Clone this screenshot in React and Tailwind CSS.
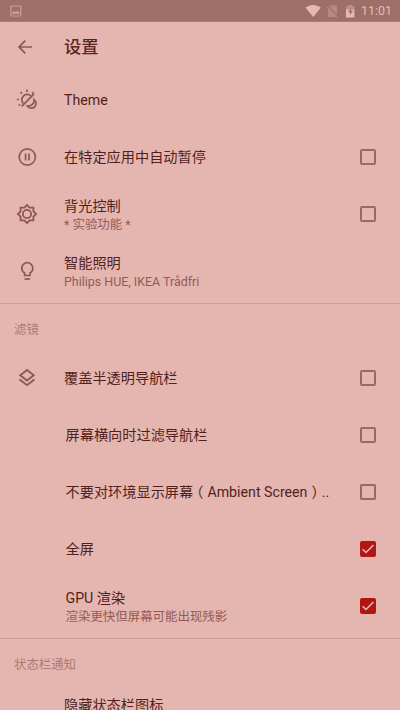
import React from 'react';

const stroke = { fill: 'none', stroke: 'currentColor' };

function ThemeIcon() {
  return (
    <svg className="h-[22px] w-[22px]" viewBox="0 0 22 22" {...stroke} strokeWidth="1.7">
      <path d="M7.400 14.600A5 5 0 1 1 14.900 7" />
      <path d="M5.700 17.300 18.100 4.900" />
      <path d="M18.100 10.600c2.200 1.800 2.500 5 .8 7-1.900 2.200-5.600 2.200-7.600-.6 4 .5 7.300-2.400 6.800-6.400Z" />
      <path d="M11 .6v2.400M4.500 3.200l1.400 1.400M17.500 3.200l-1.400 1.400M.9 10.500H3M2.700 16.600l1.500-1.200" />
    </svg>
  );
}

function PauseIcon() {
  return (
    <svg className="h-[22px] w-[22px]" viewBox="0 0 22 22" {...stroke} strokeWidth="1.700">
      <circle cx="11.300" cy="11" r="8.100" />
      <path d="M9.600 7.500v7M13 7.500v7" />
    </svg>
  );
}

function SunIcon() {
  return (
    <svg className="h-[22px] w-[22px]" viewBox="0 0 24 24" fill="currentColor">
      <path d="M20 8.690V4h-4.690L12 .69 8.690 4H4v4.690L.69 12 4 15.310V20h4.690L12 23.310 15.310 20H20v-4.690L23.310 12 20 8.690zm-2 5.790V18h-3.520L12 20.480 9.520 18H6v-3.520L3.520 12 6 9.520V6h3.520L12 3.520 14.480 6H18v3.520L20.480 12 18 14.480zM12 6.500a5.500 5.500 0 1 0 0 11 5.500 5.500 0 0 0 0-11zm0 9a3.500 3.500 0 1 1 0-7 3.500 3.500 0 0 1 0 7z" />
    </svg>
  );
}

function BulbIcon() {
  return (
    <svg className="h-[22px] w-[22px]" viewBox="0 0 22 22" {...stroke} strokeWidth="1.700">
      <path d="M8.600 15.500v-2.600C6.800 11.900 5.800 10.200 5.800 8.200a5.500 5.500 0 0 1 11 0c0 2-1 3.700-2.800 4.700v2.600Z" />
      <path d="M8.500 19h5.600" />
    </svg>
  );
}

function LayersIcon() {
  return (
    <svg className="h-[22px] w-[22px]" viewBox="0 0 24 24" fill="currentColor">
      <path d="M11.990 18.540l-7.370-5.730L3 14.070l9 7 9-7-1.630-1.270-7.380 5.740zM12 16l7.360-5.730L21 9l-9-7-9 7 1.630 1.270L12 16zm0-11.470L17.740 9 12 13.470 6.260 9 12 4.530z" />
    </svg>
  );
}

function BackIcon() {
  return (
    <svg className="h-[22px] w-[22px]" viewBox="0 0 22 22" {...stroke} strokeWidth="1.700">
      <path d="M18 11H5M11.300 4.700 5 11l6.300 6.300" />
    </svg>
  );
}

function StatusBar() {
  return (
    <div className="flex h-[22px] shrink-0 items-center justify-between border-b border-[#aa7a74] bg-[#9e6f69] pr-[8px] pl-[10px] text-[#e7b8b2]">
      <svg className="h-[12px] w-[12px] text-[#cc9e98]" viewBox="0 0 12 12">
        <rect x=".8" y="1" width="10" height="10" rx=".8" {...stroke} strokeWidth="1.200" />
        <path d="M2.300 9V7.200l1.700-1.200 1.800 1 1.700-1.300L9.300 7.500V9Z" fill="currentColor" />
      </svg>
      <div className="flex items-center">
        <svg className="h-[13px] w-[16px]" viewBox="0 0 16 13" fill="currentColor">
          <path d="M.4 3.500C5 0 11 0 15.900 3.500L8.300 12.900Z" />
        </svg>
        <svg className="ml-[5px] h-[14px] w-[12px] text-[#b78780]" viewBox="0 0 12 14">
          <path d="M4.500 1.300H10a1 1 0 0 1 1 1V13H2V4.300Z" fill="currentColor" />
          <path d="M1.500 1.500 12 13" stroke="#9e6f69" strokeWidth="1.300" />
          <path d="M.5 2 11.500 13.500" stroke="currentColor" strokeWidth="1" />
        </svg>
        <svg className="ml-[7px] h-[14px] w-[10px]" viewBox="0 0 10 14">
          <path d="M1 2h2.200V.8h4V2h2.200v4H1Z" fill="#bd8d87" />
          <path d="M1 5.500h8.400v8H1Z" fill="currentColor" />
          <path d="M6.200 3.800 3 8h1.800v3.200L8 6.800H6Z" fill="#9e6f69" />
        </svg>
        <span className="ml-[6px] w-[31px] pt-[2px] text-[12.400px] leading-none whitespace-nowrap">11:01</span>
      </div>
    </div>
  );
}

function Checkbox({ checked }) {
  return checked ? (
    <span role="checkbox" aria-checked="true" className="mt-px flex h-4 w-4 rounded-[2px] bg-[#b01713] text-[#e9b7b1]">
      <svg className="h-4 w-4" viewBox="0 0 16 16" {...stroke} strokeWidth="1.600">
        <path d="M2.600 8.200 6 11.500 13.500 4" />
      </svg>
    </span>
  ) : (
    <span role="checkbox" aria-checked="false" className="h-4 w-4 rounded-[2px] border-2 border-[#9d6862]" />
  );
}

function Row({ icon, title, sub, checked, inset }) {
  return (
    <div className="flex h-[56.750px] shrink-0 items-center pr-6">
      <div className={`flex shrink-0 pl-4 text-[#8f5751] ${inset ? 'w-[65.500px]' : 'w-16'}`}>{icon}</div>
      <div className={`flex-1 whitespace-nowrap ${sub ? (inset ? 'pt-[4px]' : 'pt-[2px]') : 'pt-px'}`}>
        <div className="text-[14.200px] leading-[19px] text-[#521f1c]">{title}</div>
        {sub && <div className="text-[12.450px] leading-[17px] text-[#925b56]">{sub}</div>}
      </div>
      {checked !== undefined && <Checkbox checked={checked} />}
    </div>
  );
}

function Section({ children, low }) {
  return (
    <div
      className={`mt-[4px] flex h-[47px] shrink-0 items-center border-t-[1.500px] border-[#ce9b95] pl-[14px] text-[12.400px] text-[#ad7a75] ${low ? 'pt-[8px]' : 'pt-[6px]'}`}
    >
      {children}
    </div>
  );
}

export default function App() {
  return (
    <main className="flex h-[710px] w-[400px] flex-col overflow-hidden bg-[#e5b6b0] font-[Roboto,'Noto_Sans_CJK_SC',sans-serif]">
      <StatusBar />
      <header className="flex h-[50px] shrink-0 items-center pl-[14px] text-[#8f5751]">
        <BackIcon />
        <h1 className="ml-[28px] pt-[2px] text-[17.300px] font-medium text-[#592522]">设置</h1>
      </header>
      <Row icon={<ThemeIcon />} title="Theme" />
      <Row icon={<PauseIcon />} title="在特定应用中自动暂停" checked={false} />
      <Row icon={<SunIcon />} title="背光控制" sub="* 实验功能 *" checked={false} />
      <Row icon={<BulbIcon />} title="智能照明" sub="Philips HUE, IKEA Trådfri" />
      <Section>滤镜</Section>
      <Row icon={<LayersIcon />} title="覆盖半透明导航栏" checked={false} />
      <Row inset title="屏幕横向时过滤导航栏" checked={false} />
      <Row
        inset
        title={
          <>
            不要对环境显示屏幕<span className="mr-[4px] -ml-[4px]">（</span>Ambient Screen
            <span className="-mr-[4px] ml-[4px]">）</span>..
          </>
        }
        checked={false}
      />
      <Row inset title="全屏" checked />
      <Row inset title="GPU 渲染" sub="渲染更快但屏幕可能出现残影" checked />
      <Section low>状态栏通知</Section>
      <div className="-mt-[8px] flex shrink-0 flex-col">
        <Row title="隐藏状态栏图标" />
      </div>
    </main>
  );
}
